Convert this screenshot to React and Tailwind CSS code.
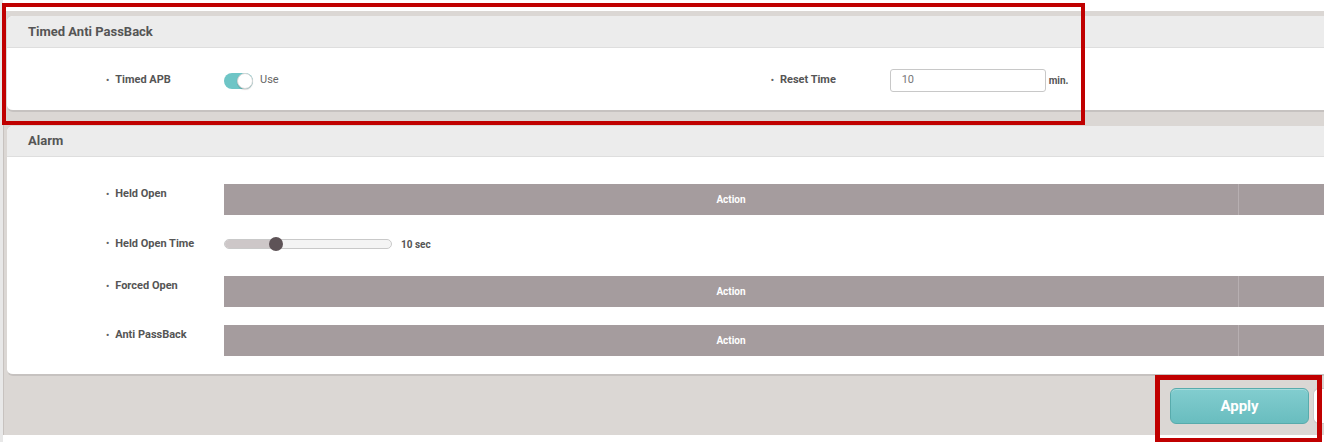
import React from 'react';

function Label({ children, className = '' }) {
  return (
    <div className={`flex w-[118px] shrink-0 items-center text-[11px] font-bold text-[#555] ${className}`}>
      <span className="mr-[6px] text-[9px] text-[#666]">•</span>
      {children}
    </div>
  );
}

function ActionBar() {
  return (
    <div className="flex h-[31px] flex-1 bg-[#a59c9e] text-[10px] font-bold text-white">
      <div className="flex w-[1015px] shrink-0 items-center justify-center border-r border-[#b7afb1]">
        Action
      </div>
      <div className="flex-1" />
    </div>
  );
}

function Toggle({ on }) {
  return (
    <div
      className={`relative h-[16px] w-[29px] rounded-full ${
        on ? 'bg-[#6ec5c6]' : 'bg-[#ccc]'
      }`}
    >
      <div className="absolute right-0 top-0 h-[16px] w-[16px] rounded-full border border-[#d6d6d6] bg-white shadow-[0_1px_1px_rgba(0,0,0,0.15)]" />
    </div>
  );
}

function Slider({ value }) {
  return (
    <div className="relative h-[10px] w-[168px] rounded-full border border-[#c9c9c9] bg-[#f4f4f4]">
      <div
        className="h-full rounded-l-full bg-[#cdc7c8]"
        style={{ width: `${value}px` }}
      />
      <div
        className="absolute top-1/2 h-[14px] w-[14px] -translate-x-1/2 -translate-y-1/2 rounded-full bg-[#5e5357]"
        style={{ left: `${value}px` }}
      />
    </div>
  );
}

export default function App() {
  return (
    <div className="relative h-[442px] w-[1324px] overflow-hidden bg-white font-['Roboto',sans-serif]">
      <div className="flex h-full">
        <div className="w-[3px] shrink-0 bg-[#e8e8e8]" />
        <div className="mt-[11px] h-[424px] flex-1 overflow-hidden border-l border-[#c7c2bf] bg-[#dbd7d4] pl-[3px] pt-[5px]">
          {/* Timed Anti PassBack */}
          <div className="w-[1340px] overflow-hidden rounded-l-[6px] border-b-2 border-[#c6c2c0] bg-white">
            <div className="flex h-[32px] items-center border-b border-[#dedede] bg-[#ececec] pl-[21px] pt-[1px] text-[13px] font-bold text-[#555]">
              Timed Anti PassBack
            </div>
            <div className="flex h-[62px] items-center pl-[99px] pt-[3px]">
              <Label>Timed APB</Label>
              <Toggle on />
              <span className="ml-[7px] text-[11px] text-[#666]">Use</span>
              <div className="ml-[492px] flex items-center">
                <Label className="w-[119px]">Reset Time</Label>
                <div className="flex h-[23px] w-[156px] items-center rounded-[3px] border border-[#c8c8c8] pl-[11px] text-[11px] text-[#777]">
                  10
                </div>
                <span className="ml-[3px] text-[10px] font-bold text-[#555]">min.</span>
              </div>
            </div>
          </div>

          {/* Alarm */}
          <div className="mt-[14px] w-[1340px] overflow-hidden rounded-l-[6px] border-b-2 border-[#c6c2c0] bg-white">
            <div className="flex h-[31px] items-center border-b border-[#dedede] bg-[#ececec] pl-[21px] text-[13px] font-bold text-[#555]">
              Alarm
            </div>
            <div className="pb-[18px] pl-[99px] pt-[27px]">
              <div className="flex">
                <Label className="h-[21px]">Held Open</Label>
                <ActionBar />
              </div>
              <div className="mt-[19px] flex h-[20px] items-center">
                <Label>Held Open Time</Label>
                <Slider value={51} />
                <span className="ml-[9px] text-[10px] font-bold text-[#555]">10 sec</span>
              </div>
              <div className="mt-[22px] flex">
                <Label className="h-[21px]">Forced Open</Label>
                <ActionBar />
              </div>
              <div className="mt-[18px] flex">
                <Label className="h-[21px]">Anti PassBack</Label>
                <ActionBar />
              </div>
            </div>
          </div>

          {/* footer buttons */}
          <div className="mt-[12px] flex justify-end">
            <button className="h-[36px] w-[139px] rounded-[6px] border border-[#58abac] bg-gradient-to-b from-[#82cdcf] to-[#69bdbf] text-[15px] font-bold text-white shadow-[inset_0_1px_0_rgba(255,255,255,0.3)]">
              Apply
            </button>
            <div className="ml-[4px] h-[36px] w-[11px] rounded-l-[6px] border border-r-0 border-[#c9c9c9] bg-white" />
          </div>
        </div>
      </div>

      {/* highlight frames */}
      <div className="pointer-events-none absolute left-[2px] top-[3px] h-[122px] w-[1083px] border-4 border-[#c00000]" />
      <div className="pointer-events-none absolute left-[1155px] top-[375px] h-[68px] w-[167px] border-[5px] border-[#c00000]" />
    </div>
  );
}
